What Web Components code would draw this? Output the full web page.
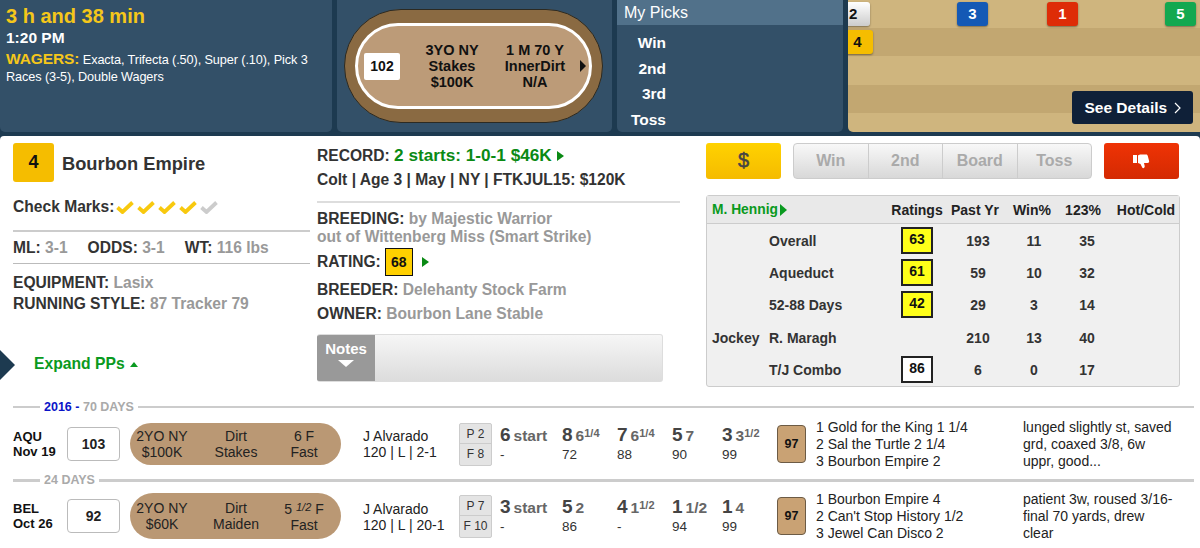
<!DOCTYPE html>
<html><head><meta charset="utf-8"><style>
html,body{margin:0;padding:0;background:#1d3a50;font-family:"Liberation Sans",Arial,sans-serif;}
body{width:1200px;height:548px;overflow:hidden;display:flex;flex-direction:column}
</style></head><body>
<race-header></race-header>
<horse-card>
  <horse-summary slot="left"></horse-summary>
  <horse-bio slot="mid"></horse-bio>
  <horse-stats slot="right"></horse-stats>
</horse-card>
<pp-divider year="2016 - " days="70 DAYS"></pp-divider>
<pp-row track="AQU" date="Nov 19" num="103" c1="2YO NY" c2="$100K" d1="Dirt" d2="Stakes" e1="6 F" e2="Fast" jk="120 | L | 2-1" p="P 2" f="F 8"
 calls='[["6","start","-"],["8","6|1/4","72"],["7","6|1/4","88"],["5","7","90"],["3","3|1/2","99"]]'
 r1="1 Gold for the King 1 1/4" r2="2 Sal the Turtle 2 1/4" r3="3 Bourbon Empire 2" cm="lunged slightly st, saved grd, coaxed 3/8, 6w uppr, good..."></pp-row>
<pp-divider days="24 DAYS"></pp-divider>
<pp-row second track="BEL" date="Oct 26" num="92" c1="2YO NY" c2="$60K" d1="Dirt" d2="Maiden" e1="5 <i>1/2</i> F" e2="Fast" jk="120 | L | 20-1" p="P 7" f="F 10"
 calls='[["3","start","-"],["5","2","86"],["4","1|1/2","-"],["1","1/2","94"],["1","4","99"]]'
 r1="1 Bourbon Empire 4" r2="2 Can't Stop History 1/2" r3="3 Jewel Can Disco 2" cm="patient 3w, roused 3/16-final 70 yards, drew clear"></pp-row>
<script>
function el(name,html){customElements.define(name,class extends HTMLElement{connectedCallback(){if(this.shadowRoot)return;const r=this.attachShadow({mode:'open'});r.innerHTML=typeof html==='function'?html(this):html;}});}
const check=c=>`<svg width="18" height="14" viewBox="0 0 18 14"><path d="M1.5 7.500 6.500 12 16.500 2.500" fill="none" stroke="${c}" stroke-width="3.800"/></svg>`;

el('race-header',`<style>
:host{display:flex;height:132px;gap:5px;flex:none;margin-bottom:4px}
.p{background:#335068;border-radius:0 0 5px 5px;box-sizing:border-box}
.a{width:332px;padding:4px 0 0 6px;color:#fff}
.a h1{margin:0;font-size:20px;line-height:24px;color:#f5c71a}
.a .t{font-size:15.500px;font-weight:bold;line-height:20px;margin-top:0}
.a .w{font-size:12.700px;line-height:17px;margin-top:2px;letter-spacing:-.1px}
.a .w b{font-size:15.500px;color:#f5c71a}
.b{width:275px;display:flex;align-items:center;justify-content:center}
.oval{width:259px;height:114px;box-sizing:border-box;border-radius:57px;background:#8a6a42;border:1px solid #2c2a22;padding:13px 10px;margin-left:-2px}
.in{height:100%;box-sizing:border-box;border:3px solid #fff;border-radius:44px;background:#bc9b78;display:flex;align-items:center;font:bold 14.500px/16px "Liberation Sans";color:#111;text-align:center;padding-left:6px}
.n{width:36px;height:27px;background:#fff;border-radius:2px;line-height:27px;font-size:14px;flex:none;margin-right:17px}
.c{width:70px;flex:none}.c+.c{margin-left:13px}
.ar{flex:none;width:0;height:0;border-left:6px solid #111;border-top:6px solid transparent;border-bottom:6px solid transparent;margin-left:10px}
.cc{width:226px;overflow:hidden;color:#fff}
.hd{height:25px;background:#51718a;font-size:16px;line-height:25px;padding-left:7px}
.l{display:grid;grid-template-columns:49px;justify-content:start;font:bold 15.500px/25.500px "Liberation Sans";text-align:right;padding-top:5px}
.d{width:352px;background:#cfb57e;border-radius:0 0 0 5px;position:relative;overflow:hidden;display:grid;grid-template-rows:28px 28px 29px 28px 19px}
.d .r2{background:#c2a771}
.bd{position:absolute;top:2px;height:24px;width:31px;border-radius:3px;font:bold 15px/24px "Liberation Sans";text-align:center;color:#fff;box-shadow:0 1px 2px rgba(0,0,0,.4)}
.see{position:absolute;left:224px;top:91px;width:121px;height:33px;background:#0f2038;border-radius:3px;color:#fff;font:bold 15.500px/33px "Liberation Sans";text-align:center}
.see svg{vertical-align:-1px;margin-left:2px}
</style>
<div class="p a"><h1>3 h and 38 min</h1><div class="t">1:20 PM</div><div class="w"><b>WAGERS:</b> Exacta, Trifecta (.50), Super (.10), Pick 3<br>Races (3-5), Double Wagers</div></div>
<div class="p b"><div class="oval"><div class="in"><div class="n">102</div><div class="c">3YO NY<br>Stakes<br>$100K</div><div class="c">1 M 70 Y<br>InnerDirt<br>N/A</div><div class="ar"></div></div></div></div>
<div class="p cc"><div class="hd">My Picks</div><div class="l"><div>Win</div><div>2nd</div><div>3rd</div><div>Toss</div></div></div>
<div class="d"><div></div><div class="r2"></div><div></div><div class="r2"></div><div></div>
<span class="bd" style="left:-6px;width:28px;background:linear-gradient(#fff,#ccc);color:#111;text-align:left;padding-left:7px;box-sizing:border-box">2</span>
<span class="bd" style="left:109px;background:#1459b5">3</span>
<span class="bd" style="left:199px;background:#de2c07">1</span>
<span class="bd" style="left:317px;background:#13a850">5</span>
<span class="bd" style="left:-6px;top:30px;background:#f5bd00;color:#111">4</span>
<div class="see">See Details <svg width="7" height="12" viewBox="0 0 7 12"><path d="M1 1l5 5-5 5" fill="none" stroke="#fff" stroke-width="1.200"/></svg></div></div>`);

el('horse-card',`<style>
:host{display:grid;grid-template-columns:297px 382px 474px;column-gap:7px;padding:7px 0 0 13px;background:#fff;height:264px;box-sizing:border-box;flex:none;border-radius:4px 4px 0 0;position:relative;color:#333}
.tab{position:absolute;left:-15px;top:214px;width:30px;height:30px;background:#1d3a50;clip-path:polygon(0 0,50% 0,100% 50%,50% 100%,0 100%)}
</style><slot name="left"></slot><slot name="mid"></slot><slot name="right"></slot><div class="tab"></div>`);

el('horse-summary',()=>`<style>
:host{display:block;font:bold 15.600px/20px "Liberation Sans";color:#333}
.top{display:flex;align-items:center;gap:8px;height:39px}
.n{width:41px;height:39px;background:#f5bd00;border-radius:3px;text-align:center;font:bold 18px/39px "Liberation Sans";color:#111}
.nm{font-size:18.300px;padding-top:3px}
.ck{display:flex;align-items:center;height:20px;margin-top:15px;padding-bottom:13px;border-bottom:2px solid #ccc;gap:3px}
.ck span{margin-right:-1px}
.ck svg{display:block}
.o{display:flex;height:31px;align-items:center;border-bottom:1px solid #bbb}
.g{color:#999}
.e{margin-top:8px;line-height:21px}
.x{margin-top:40px;margin-left:21px;color:#0a9a20;font-size:15.700px;line-height:20px;display:flex;align-items:center;gap:5px}
.x i{width:0;height:0;border-left:4px solid transparent;border-right:4px solid transparent;border-bottom:5px solid #0a9a20}
</style>
<div class="top"><div class="n">4</div><div class="nm">Bourbon Empire</div></div>
<div class="ck"><span>Check Marks:</span>${check('#f8c90e').repeat(4)}${check('#ccc')}</div>
<div class="o"><span>ML: <span class="g">3-1</span></span><span style="margin-left:20px">ODDS: <span class="g">3-1</span></span><span style="margin-left:20px">WT: <span class="g">116 lbs</span></span></div>
<div class="e">EQUIPMENT: <span class="g">Lasix</span><br>RUNNING STYLE: <span class="g">87 Tracker 79</span></div>
<div class="x">Expand PPs <i></i></div>`);

el('horse-bio',`<style>
:host{display:block;font:bold 15.600px/20px "Liberation Sans";color:#333}
.g{color:#999}.gr{color:#0a8a14;font-size:17.200px}
i.a{display:inline-block;width:0;height:0;border-left:7px solid #0a8a14;border-top:5px solid transparent;border-bottom:5px solid transparent;margin-left:5px}
.hd{padding:0 0 9px;margin-right:19px;border-bottom:2px solid #ddd;line-height:24px}
.br{margin-top:7px;line-height:18px}
.rt{display:flex;align-items:center;margin-top:2px;height:28px;gap:4px}
.rt b{width:28px;height:28px;box-sizing:border-box;border:1px solid #111;background:#ffd000;color:#111;text-align:center;line-height:26px;font-size:14px}
.rt i.a{margin-left:5px}
.ow{margin-top:2px;line-height:24px}
.notes{margin-top:8px;width:346px;height:48px;display:flex;border-radius:3px;overflow:hidden;border:1px solid #ddd;border-left:0;box-sizing:border-box;background:linear-gradient(#f6f6f6,#dcdcdc)}
.nt{width:58px;background:#999;color:#fff;text-align:center;font-size:15px;line-height:28px;height:100%}
.nt i{display:block;width:0;height:0;margin:-3px auto 0;border-left:8px solid transparent;border-right:8px solid transparent;border-top:7px solid #fff}
</style>
<div class="hd">RECORD: <span class="gr">2 starts: 1-0-1 $46K</span><i class="a"></i><br>Colt | Age 3 | May | NY | FTKJUL15: $120K</div>
<div class="br">BREEDING: <span class="g">by Majestic Warrior<br>out of Wittenberg Miss (Smart Strike)</span></div>
<div class="rt">RATING: <b>68</b><i class="a"></i></div>
<div class="ow">BREEDER: <span class="g">Delehanty Stock Farm</span><br>OWNER: <span class="g">Bourbon Lane Stable</span></div>
<div class="notes"><div class="nt">Notes<i></i></div></div>`);

el('horse-stats',`<style>
:host{display:block;font:bold 14px/20px "Liberation Sans";color:#333}
.btns{display:flex;height:36px;margin-bottom:16px}
.d{width:75px;background:linear-gradient(#ffd200,#f5bb00);border-radius:3px;text-align:center;font:normal 20px/34px "Liberation Sans";color:#444;-webkit-text-stroke:.5px #444}
.seg{display:flex;width:299px;margin-left:12px;border:1px solid #ccc;border-radius:4px;box-sizing:border-box;background:linear-gradient(#f8f8f8,#d8d8d8)}
.seg span{flex:1;text-align:center;font:bold 16px/33px "Liberation Sans";color:#aaa;border-left:1px solid #ccc}
.seg span:first-child{border:0}
.th{width:75px;margin-left:12px;background:linear-gradient(#ef3305,#d42a02);border-radius:3px;display:flex;align-items:center;justify-content:center}
.t{width:474px;height:192px;box-sizing:border-box;border:1px solid #ccc;border-radius:3px;background:#f0f0f0;display:grid;grid-template-columns:56px 122px 64px 58px 54px 52px 1fr;grid-template-rows:28px repeat(5,32.400px);text-align:center;align-items:center}
.t>div{height:100%;display:flex;align-items:center;justify-content:center}
.h{border-bottom:1px solid #ccc;box-sizing:border-box;color:#222;background:#e9e9e9}
.h.m{grid-column:1/3;justify-content:flex-start!important;color:#0a9a20;padding-left:5px;font-size:13.800px}
.h.m i{width:0;height:0;border-left:7px solid #0a9a20;border-top:6px solid transparent;border-bottom:6px solid transparent;margin-left:2px}
.l{justify-content:flex-start!important;padding-left:6px}
.j{justify-content:flex-start!important;padding-left:5px}
.r{padding-top:1px;box-sizing:border-box}
b{display:block;width:32px;height:27px;box-sizing:border-box;border:2px solid #222;background:#ffff19;color:#111;line-height:21px;text-align:center}
b.w{background:#fff}
</style>
<div class="btns"><div class="d">$</div><div class="seg"><span>Win</span><span>2nd</span><span>Board</span><span>Toss</span></div><div class="th"><svg width="17" height="15" viewBox="0 0 17 15"><path fill="#fff" d="M0 1h4v8H0zM5 1.500C6 .5 7 .5 8 .5h5c1.200 0 1.600.7 1.800 1.500l1.300 5c.3 1.300-.4 2-1.600 2h-3.500l.7 3c.2 1.200-.6 2.200-1.500 2.200-.7 0-1-.6-1.200-1.200L7.500 10 5 9z"/></svg></div></div>
<div class="t">
<div class="h m">M. Hennig<i></i></div><div class="h" style="grid-column:3">Ratings</div><div class="h" style="padding-right:6px">Past Yr</div><div class="h" style="padding-right:4px">Win%</div><div class="h" style="padding-right:8px">123%</div><div class="h">Hot/Cold</div>
<div></div><div class="l r">Overall</div><div><b>63</b></div><div class="r">193</div><div class="r">11</div><div class="r">35</div><div></div>
<div></div><div class="l r">Aqueduct</div><div><b>61</b></div><div class="r">59</div><div class="r">10</div><div class="r">32</div><div></div>
<div></div><div class="l r">52-88 Days</div><div><b>42</b></div><div class="r">29</div><div class="r">3</div><div class="r">14</div><div></div>
<div class="j r">Jockey</div><div class="l r">R. Maragh</div><div></div><div class="r">210</div><div class="r">13</div><div class="r">40</div><div></div>
<div></div><div class="l r">T/J Combo</div><div><b class="w">86</b></div><div class="r">6</div><div class="r">0</div><div class="r">17</div><div></div>
</div>`);

el('pp-divider',h=>`<style>
:host{display:flex;align-items:center;background:#fff;padding:0 6px 0 13px;height:${h.getAttribute('year')?14:12}px;flex:none;font:bold 12.500px/12px "Liberation Sans";color:#aaa;gap:4px}
i{height:${h.getAttribute('year')?2:3}px;background:#ccc;display:block}
i.a{width:27px}i.b{flex:1}
em{font-style:normal;color:#0a14c8}
</style><i class="a"></i><span>${h.getAttribute('year')?`<em>${h.getAttribute('year').split(' ')[0]}</em> <em>-</em> `:''}${h.getAttribute('days')}</span><i class="b"></i>`);

el('pp-row',h=>{const a=k=>h.getAttribute(k);const s2=h.hasAttribute('second');
const calls=JSON.parse(a('calls')).map(([n,m,s],i)=>{const [w,fr]=m.split('|');
return `<div class="call"><div class="tp"><span class="big">${n}</span><span class="md">${w}</span>${fr?`<span class="sm">${fr}</span>`:''}</div><div class="sub">${s}</div></div>`}).join('');
return `<style>
:host{display:grid;grid-template-columns:54px 63px 233px 96px 41px 62px 55px 55px 50px 55px 39px 207px 1fr;align-items:center;background:#fff;padding:0 6px ${s2?2:0}px 13px;height:${s2?62:60}px;box-sizing:border-box;flex:none;font:14px/16px "Liberation Sans";color:#222}
.trk{font:bold 13px/15px "Liberation Sans";color:#111}
.num{width:53px;height:34px;box-sizing:border-box;border:1px solid #bbb;border-radius:4px;text-align:center;font:bold 14px/32px "Liberation Sans"}
.pill{width:211px;height:${s2?46:42}px;border-radius:23px;background:#ba9874;display:grid;grid-template-columns:64px 84px 52px;text-align:center;align-items:center;font-size:14px;line-height:16px}
.pill i{font-size:11px;vertical-align:3px}
.jk{line-height:16px;${s2?'padding-top:1px':''}}
.pf{width:33px;height:43px;box-sizing:border-box;border:1px solid #ccc;border-radius:2px;background:#e4e4e4;font-size:12px;text-align:center;display:grid;grid-template-rows:1fr 1fr;align-items:center;color:#333}
.pf span+span{border-top:1px solid #ccc;height:100%;line-height:20px}
.big{font:bold 19px/18px "Liberation Sans";color:#444}
.md{font:bold 15.500px/18px "Liberation Sans";color:#666;margin-left:3px}
.sm{font:bold 11px/10px "Liberation Sans";color:#666;vertical-align:4px}
.sub{font-size:13.500px;margin-top:2px;line-height:16px;color:#333}
.sp{width:29px;height:38px;box-sizing:border-box;border:1px solid #6c5b45;border-radius:4px;background:#c9a274;font:bold 12.500px/36px "Liberation Sans";text-align:center;color:#111}
.res{line-height:17px;font-size:14px}
.cm{line-height:17px;font-size:14px;width:152px}
</style>
<div class="trk">${a('track')}<br>${a('date')}</div><div class="num">${a('num')}</div>
<div class="pill"><div>${a('c1')}<br>${a('c2')}</div><div>${a('d1')}<br>${a('d2')}</div><div>${a('e1')}<br>${a('e2')}</div></div>
<div class="jk">J Alvarado<br>${a('jk')}</div>
<div class="pf"><span>${a('p')}</span><span>${a('f')}</span></div>
${calls}
<div class="sp">97</div>
<div class="res">${a('r1')}<br>${a('r2')}<br>${a('r3')}</div><div class="cm">${a('cm')}</div>`});
</script></body></html>
